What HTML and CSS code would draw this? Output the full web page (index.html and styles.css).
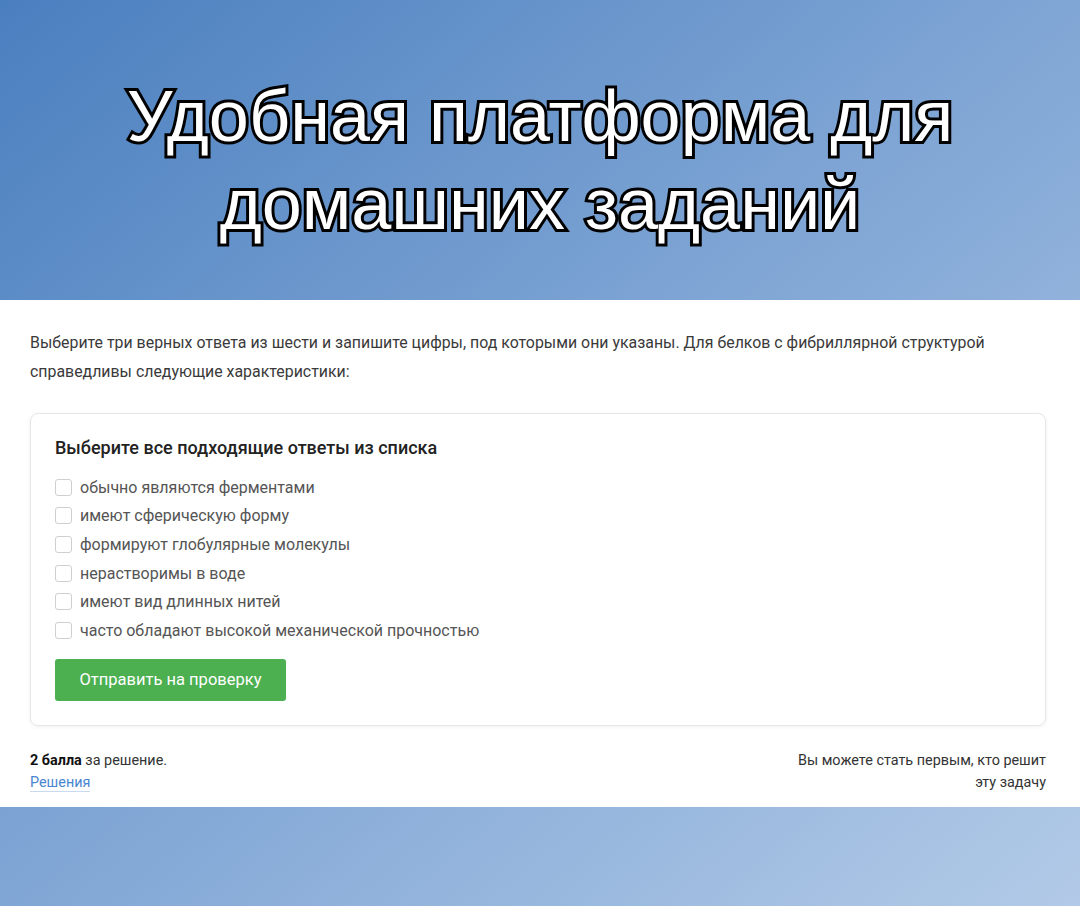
FILE: index.html
```html
<!DOCTYPE html>
<html lang="ru">

<head>
  <meta charset="UTF-8">
  <meta name="viewport" content="width=device-width, initial-scale=1.0">
  <title>Домашние задания</title>
  <link rel="stylesheet" href="styles.css">
</head>

<body>
  <header class="banner">
    <h1 class="banner-title">Удобная платформа для<br>домашних заданий</h1>
  </header>

  <main class="task">
    <p class="task-text">Выберите три верных ответа из шести и запишите цифры, под которыми они указаны. Для белков с фибриллярной структурой справедливы следующие характеристики:</p>

    <form class="answer-card">
      <h2 class="answer-title">Выберите все подходящие ответы из списка</h2>

      <ul class="options">
        <li><label><input type="checkbox" name="a1"><span class="box"></span>обычно являются ферментами</label></li>
        <li><label><input type="checkbox" name="a2"><span class="box"></span>имеют сферическую форму</label></li>
        <li><label><input type="checkbox" name="a3"><span class="box"></span>формируют глобулярные молекулы</label></li>
        <li><label><input type="checkbox" name="a4"><span class="box"></span>нерастворимы в воде</label></li>
        <li><label><input type="checkbox" name="a5"><span class="box"></span>имеют вид длинных нитей</label></li>
        <li><label><input type="checkbox" name="a6"><span class="box"></span>часто обладают высокой механической прочностью</label></li>
      </ul>

      <button type="button" class="submit-btn">Отправить на проверку</button>
    </form>

    <div class="task-footer">
      <div class="score">
        <p><b>2 балла</b> за решение.</p>
        <a href="#" class="solutions-link">Решения</a>
      </div>
      <p class="first-solver">Вы можете стать первым, кто решит<br>эту задачу</p>
    </div>
  </main>
</body>

</html>
```

FILE: styles.css
```css
* {
  margin: 0;
  padding: 0;
  box-sizing: border-box;
}

body {
  min-height: 100vh;
  font-family: Roboto, "Liberation Sans", sans-serif;
  background: linear-gradient(to bottom right, #4a7fbf 0%, #80a6d5 50%, #b2cae7 100%);
}

/* top banner */
.banner {
  height: 300px;
  display: flex;
  justify-content: center;
  align-items: center;
  padding-top: 20px;
}

.banner-title {
  font-family: "Liberation Sans", Arial, sans-serif;
  font-weight: 400;
  font-size: 72px;
  line-height: 88px;
  text-align: center;
  color: #fff;
  -webkit-text-stroke: 6px #000;
  paint-order: stroke fill;
}

/* white task block */
.task {
  background: #fff;
  padding: 28px 34px 13px 30px;
}

.task-text {
  font-size: 15.9px;
  line-height: 29px;
  color: #3a3a3a;
}

.answer-card {
  margin-top: 27px;
  border: 1px solid #e6e6e6;
  border-radius: 8px;
  box-shadow: 0 1px 4px rgba(0, 0, 0, 0.06);
  padding: 21px 24px 24px;
}

.answer-title {
  font-size: 18px;
  font-weight: 500;
  color: #222;
  line-height: 26px;
}

.options {
  list-style: none;
  margin-top: 12px;
}

.options li {
  height: 28.6px;
  display: flex;
  align-items: center;
}

.options label {
  display: flex;
  align-items: center;
  font-size: 16px;
  color: #555;
  cursor: pointer;
}

.options input {
  display: none;
}

.box {
  width: 17px;
  height: 17px;
  border: 1px solid #cfcfcf;
  border-radius: 3px;
  margin-right: 8px;
  background: #fff;
}

.submit-btn {
  margin-top: 14px;
  width: 231px;
  height: 42px;
  background-color: #4caf50;
  color: #fff;
  border: none;
  border-radius: 3px;
  font-family: Roboto, "Liberation Sans", sans-serif;
  font-size: 16.5px;
  cursor: pointer;
}

.submit-btn:hover {
  background-color: #43a047;
}

.task-footer {
  display: flex;
  justify-content: space-between;
  margin-top: 24px;
  font-size: 14.4px;
  line-height: 22px;
  color: #333;
}

.score b {
  color: #111;
}

.solutions-link {
  color: #4a86d0;
  text-decoration: none;
  border-bottom: 1px solid #c9daf0;
}

.first-solver {
  text-align: right;
}
```
